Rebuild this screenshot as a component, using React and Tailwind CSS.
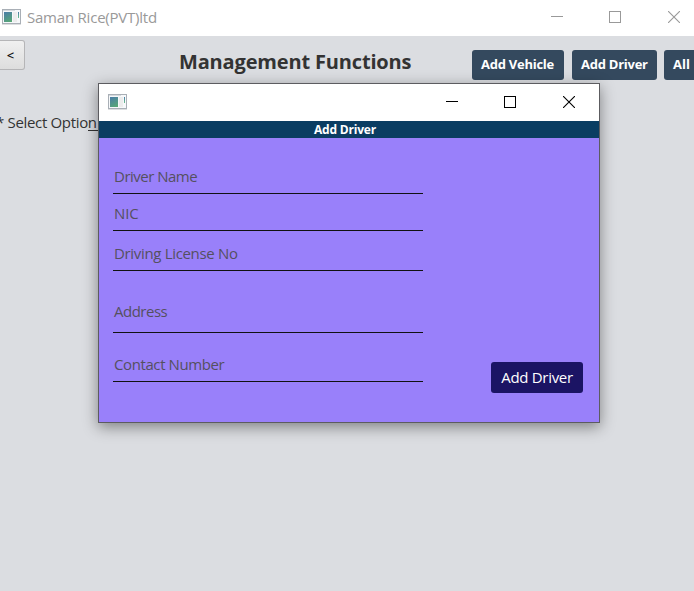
import React from 'react';

function AppIcon() {
  return (
    <svg width="19" height="16" viewBox="0 0 19 16" className="shrink-0" shapeRendering="crispEdges">
      <defs>
        <linearGradient id="pane" gradientUnits="userSpaceOnUse" x1="2" y1="3" x2="8" y2="14">
          <stop offset="0" stopColor="#4a7ba8" />
          <stop offset="1" stopColor="#58ab72" />
        </linearGradient>
        <linearGradient id="meter" gradientUnits="userSpaceOnUse" x1="16" y1="3" x2="16" y2="9">
          <stop offset="0" stopColor="#4a7ba8" />
          <stop offset="1" stopColor="#6cc08a" />
        </linearGradient>
      </defs>
      <rect x="0" y="0" width="19" height="15" fill="#a9afb6" />
      <rect x="1" y="1" width="17" height="13" fill="#f6f8fa" />
      <rect x="0" y="15" width="19" height="1" fill="#dcdee0" />
      <rect x="1" y="1" width="12" height="1" fill="#d5d9dd" />
      <rect x="2" y="3" width="8" height="10" fill="url(#pane)" />
      <rect x="11" y="3" width="4" height="10" fill="#ececec" />
      <rect x="16" y="3" width="1" height="6" fill="url(#meter)" />
    </svg>
  );
}

function WindowControls({ className }) {
  return (
    <div className={`flex ${className}`}>
      <svg width="12" height="12" viewBox="0 0 12 12" shapeRendering="crispEdges">
        <path d="M0 5.5H12" stroke="currentColor" />
      </svg>
      <svg className="ml-[46px]" width="12" height="12" viewBox="0 0 12 12" shapeRendering="crispEdges">
        <rect x="0.5" y="0.5" width="11" height="11" fill="none" stroke="currentColor" />
      </svg>
      <svg className="ml-[47px]" width="12" height="12" viewBox="0 0 12 12">
        <path d="M0 0L12 12M12 0L0 12" stroke="currentColor" strokeWidth="1.1" />
      </svg>
    </div>
  );
}

function NavButton({ label, className }) {
  return (
    <button className={`h-[30px] shrink-0 whitespace-nowrap rounded-[3px] bg-[#34495e] pb-px text-left text-[13px] font-bold text-white ${className}`}>
      {label}
    </button>
  );
}

function Field({ label, className, tracking }) {
  return (
    <div className={`flex w-[310px] items-end border-b border-[#111] pl-px text-[15px] leading-5 text-[#55505f] ${className}`}>
      <span className={`whitespace-nowrap ${tracking}`}>{label}</span>
    </div>
  );
}

function DriverDialog() {
  return (
    <section className="absolute left-[98px] top-[83px] flex h-[340px] w-[502px] flex-col border border-[#5c5c60] bg-[#9980fa] shadow-[0_4px_14px_rgba(0,0,0,0.42)]">
      <header className="flex h-[37px] shrink-0 items-center justify-between bg-white pb-[2px] pl-[9px] pr-6">
        <AppIcon />
        <WindowControls className="text-black" />
      </header>
      <h2 className="h-[17px] shrink-0 bg-[#0a3d62] pr-[8px] text-center text-[12px] font-bold leading-[17px] tracking-[-0.2px] text-white">Add Driver</h2>
      <div className="flex flex-1 items-end justify-between pl-[14px] pr-4">
        <div className="flex flex-col self-start">
          <Field label="Driver Name" className="h-14 pb-[7px]" tracking="tracking-[-0.5px]" />
          <Field label="NIC" className="h-[37px] pb-[7px]" tracking="tracking-[-0.1px]" />
          <Field label="Driving License No" className="h-10 pb-[7px]" tracking="tracking-[-0.33px]" />
          <Field label="Address" className="h-[62px] pb-[11px]" tracking="tracking-[-0.5px]" />
          <Field label="Contact Number" className="h-[49px] pb-[7px]" tracking="tracking-[-0.4px]" />
        </div>
        <button className="mb-[29px] h-[31px] w-[92px] whitespace-nowrap rounded-[3px] bg-[#1b1464] text-[15px] tracking-[-0.3px] text-white">Add Driver</button>
      </div>
    </section>
  );
}

export default function App() {
  return (
    <div className="relative flex h-[591px] w-[694px] flex-col overflow-hidden bg-[#dbdde1] font-['Open_Sans','Noto_Sans',sans-serif]">
      <header className="flex h-9 shrink-0 items-center bg-white pb-[2px] pl-[2px] pr-[14px]">
        <AppIcon />
        <span className="ml-[6px] whitespace-nowrap text-[15px] tracking-[-0.22px] text-[#999]">Saman Rice(PVT)ltd</span>
        <WindowControls className="ml-auto text-[#999]" />
      </header>
      <div className="flex items-start">
        <button className="mt-1 h-[30px] w-[25px] shrink-0 rounded-r-[3px] border border-l-0 border-[#b5b5b7] bg-linear-to-b from-[#f0f0f0] to-[#dddddd] pr-[3px] pt-px text-[13px] font-semibold text-[#111]">&lt;</button>
        <h1 className="ml-[154px] mt-3 w-[293px] shrink-0 whitespace-nowrap text-[20px] font-bold leading-7 tracking-[-0.16px] text-[#333]">Management Functions</h1>
        <nav className="mt-[14px] flex shrink-0">
          <NavButton label="Add Vehicle" className="w-[92px] pl-[9px] tracking-[-0.25px]" />
          <NavButton label="Add Driver" className="ml-2 w-[85px] pl-[9px] tracking-[-0.25px]" />
          <NavButton label="All" className="ml-[7px] w-[85px] pl-[9px]" />
        </nav>
      </div>
      <div className="-ml-1 mt-8 flex whitespace-nowrap text-[15px] leading-5 text-[#333]">
        <span className="w-[92px] tracking-[-0.33px]">* Select Option</span>
        <span className="h-[19px] w-[200px] border-b border-[#333]" />
      </div>
      <DriverDialog />
    </div>
  );
}
